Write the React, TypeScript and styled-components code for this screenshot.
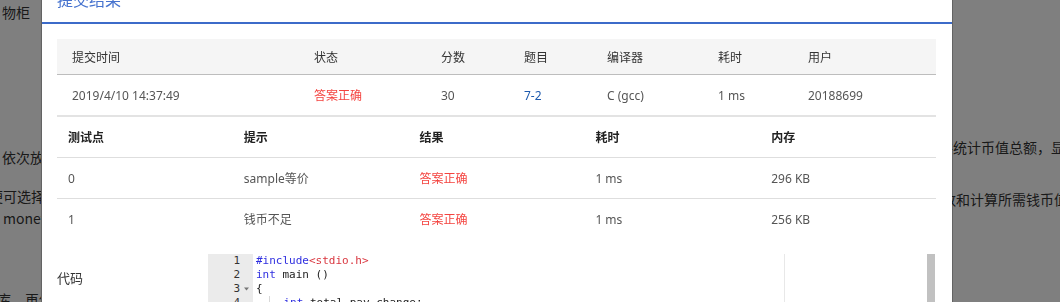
import React from "react";
import styled, { createGlobalStyle } from "styled-components";

const GlobalStyle = createGlobalStyle`
  html, body {
    margin: 0;
    padding: 0;
    overflow: hidden;
    background: #ffffff;
  }
  body {
    font-family: "Noto Sans", "Noto Sans CJK SC", sans-serif;
  }
`;

/* ---------- underlying page (dimmed by the overlay) ---------- */

const Page = styled.div`
  height: 302px;
  display: flex;
  justify-content: space-between;
  overflow: hidden;
  color: #333;
  font-family: "Noto Sans CJK SC", "Noto Sans", sans-serif;
  font-size: 14px;
  line-height: 22px;
`;

const Side = styled.div<{ $width: number }>`
  width: ${(p) => p.$width}px;
  display: flex;
  flex-direction: column;
  overflow: hidden;
`;

const PageLine = styled.div<{ $top: number; $shift?: number }>`
  margin-top: ${(p) => p.$top}px;
  margin-left: ${(p) => p.$shift ?? 0}px;
  white-space: nowrap;
`;

const PageRule = styled.div<{ $top: number }>`
  margin-top: ${(p) => p.$top}px;
  height: 1px;
  background: #333;
`;

/* ---------- modal ---------- */

const Overlay = styled.div`
  position: fixed;
  inset: 0;
  background: rgba(0, 0, 0, 0.5);
  display: flex;
  align-items: flex-start;
  padding-left: 42px;
  overflow: hidden;
`;

const Modal = styled.div`
  width: 910px;
  margin-top: -24px;
  background: #fff;
  box-shadow: 0 0 0 1px rgba(0, 0, 0, 0.22);
  display: flex;
  flex-direction: column;
`;

const ModalHeader = styled.div`
  height: 46px;
  border-bottom: 2px solid #3c6bc9;
  padding-left: 15px;
  display: flex;
  align-items: center;
`;

const Title = styled.h3`
  margin: 0;
  font-size: 16px;
  font-weight: normal;
  color: #4673cf;
  font-family: "Noto Sans CJK SC", sans-serif;
`;

const ModalBody = styled.div`
  padding: 15px 16px 0 15px;
  display: flex;
  flex-direction: column;
  font-size: 12px;
  color: #555;
`;

const SummaryRow = styled.div<{ $head?: boolean }>`
  display: grid;
  grid-template-columns: 242px 127px 83px 83px 111px 90px 1fr;
  height: ${(p) => (p.$head ? 35 : 40)}px;
  align-items: center;
  background: ${(p) => (p.$head ? "#f5f5f5" : "#fff")};
  border-bottom: ${(p) => (p.$head ? "1px solid #bdbdbd" : "none")};
  color: ${(p) => (p.$head ? "#333" : "#555")};
`;

const Cell = styled.div<{ $pad: number; $tone?: "ok" | "link" }>`
  padding-left: ${(p) => p.$pad}px;
  white-space: nowrap;
  color: ${(p) =>
    p.$tone === "ok" ? "#f4433f" : p.$tone === "link" ? "#1d59ad" : "inherit"};
`;

const CaseTable = styled.div`
  border-top: 2px solid #e3e3e3;
  display: flex;
  flex-direction: column;
`;

const CaseRow = styled.div<{ $head?: boolean; $last?: boolean }>`
  display: grid;
  grid-template-columns: repeat(5, 1fr);
  height: 40px;
  align-items: center;
  border-bottom: ${(p) => (p.$last ? "none" : "1px solid #dedede")};
  color: ${(p) => (p.$head ? "#222" : "#555")};
  font-weight: ${(p) => (p.$head ? 600 : "normal")};
`;

const CodeRow = styled.div`
  margin-top: 15px;
  display: flex;
  align-items: flex-start;
`;

const CodeLabel = styled.div`
  width: 151px;
  flex: none;
  padding-top: 17px;
  font-size: 13px;
  line-height: 14px;
  color: #333;
  font-family: "Noto Sans CJK SC", sans-serif;
`;

const Editor = styled.div`
  flex: 1;
  height: 420px;
  display: flex;
  position: relative;
  font-family: "DejaVu Sans Mono", monospace;
  font-size: 11px;
  line-height: 14px;
  color: #222;
`;

const Gutter = styled.div`
  width: 45px;
  flex: none;
  background: #ebebeb;
  color: #333;
  display: flex;
  flex-direction: column;
`;

const GutterCell = styled.div`
  display: flex;
  justify-content: flex-end;
  align-items: center;
  height: 14px;
`;

const FoldSlot = styled.span`
  width: 13px;
  display: flex;
  justify-content: center;
  align-items: center;
`;

const CodeArea = styled.div`
  flex: 1;
  position: relative;
  padding-left: 3px;
  display: flex;
  flex-direction: column;
`;

const CodeLine = styled.div`
  height: 14px;
  white-space: pre;
`;

const Kw = styled.span`
  color: #2f2fe0;
`;

const Str = styled.span`
  color: #d9363f;
`;

const Guide = styled.span`
  border-right: 1px solid #d8d8d8;
`;

const PrintMargin = styled.div`
  position: absolute;
  top: 0;
  bottom: 0;
  left: 531px;
  width: 1px;
  background: #e8e8e8;
`;

const ScrollThumb = styled.div`
  position: absolute;
  top: 0;
  right: 1px;
  width: 8px;
  height: 120px;
  background: #c1c1c1;
`;

const FoldIcon = () => (
  <svg width="5" height="4" viewBox="0 0 5 4">
    <path d="M0 0.5 L5 0.5 L2.5 3.5 Z" fill="#777" />
  </svg>
);

const summaryHead = ["提交时间", "状态", "分数", "题目", "编译器", "耗时", "用户"];

const cases = [
  { id: "0", hint: "sample等价", result: "答案正确", time: "1 ms", mem: "296 KB" },
  { id: "1", hint: "钱币不足", result: "答案正确", time: "1 ms", mem: "256 KB" },
];

const codeLines: React.ReactNode[] = [
  <>
    <Kw>#include</Kw>
    <Str>{"<stdio.h>"}</Str>
  </>,
  <>
    <Kw>int</Kw> main ()
  </>,
  <>{"{"}</>,
  <>
    <Guide>{"  "}</Guide>
    {"  "}
    <Kw>int</Kw> total,pay,change;
  </>,
  <>
    <Guide>{"  "}</Guide>
    {"  "}scanf(<Str>"%d"</Str>,&amp;pay);
  </>,
  <>
    <Guide>{"  "}</Guide>
    {"  "}
    <Kw>return</Kw> 0;
  </>,
  <>{"}"}</>,
];

export default function App() {
  return (
    <>
      <GlobalStyle />
      <Page>
        <Side $width={41}>
          <PageLine $top={1} $shift={2}>物柜</PageLine>
          <PageRule $top={76} />
          <PageLine $top={47} $shift={2}>依次放入</PageLine>
          <PageLine $top={17} $shift={-11}>便可选择</PageLine>
          <PageLine $top={0} $shift={3}>money</PageLine>
          <PageLine $top={59} $shift={-3}>库，再使用</PageLine>
        </Side>
        <Side $width={108}>
          <PageLine $top={136} $shift={-13}>并统计币值总额，显示</PageLine>
          <PageLine $top={30} $shift={-10}>数和计算所需钱币值</PageLine>
        </Side>
      </Page>
      <Overlay>
        <Modal>
          <ModalHeader>
            <Title>提交结果</Title>
          </ModalHeader>
          <ModalBody>
            <SummaryRow $head>
              {summaryHead.map((h) => (
                <Cell key={h} $pad={15}>
                  {h}
                </Cell>
              ))}
            </SummaryRow>
            <SummaryRow>
              <Cell $pad={15}>2019/4/10 14:37:49</Cell>
              <Cell $pad={15} $tone="ok">答案正确</Cell>
              <Cell $pad={15}>30</Cell>
              <Cell $pad={15} $tone="link">7-2</Cell>
              <Cell $pad={15}>C (gcc)</Cell>
              <Cell $pad={15}>1 ms</Cell>
              <Cell $pad={15}>20188699</Cell>
            </SummaryRow>
            <CaseTable>
              <CaseRow $head>
                {["测试点", "提示", "结果", "耗时", "内存"].map((h) => (
                  <Cell key={h} $pad={11}>
                    {h}
                  </Cell>
                ))}
              </CaseRow>
              {cases.map((c, i) => (
                <CaseRow key={c.id} $last={i === cases.length - 1}>
                  <Cell $pad={11}>{c.id}</Cell>
                  <Cell $pad={11}>{c.hint}</Cell>
                  <Cell $pad={11} $tone="ok">{c.result}</Cell>
                  <Cell $pad={11}>{c.time}</Cell>
                  <Cell $pad={11}>{c.mem}</Cell>
                </CaseRow>
              ))}
            </CaseTable>
            <CodeRow>
              <CodeLabel>代码</CodeLabel>
              <Editor>
                <Gutter>
                  {codeLines.map((_, i) => (
                    <GutterCell key={i}>
                      <span>{i + 1}</span>
                      <FoldSlot>{i === 2 ? <FoldIcon /> : null}</FoldSlot>
                    </GutterCell>
                  ))}
                </Gutter>
                <CodeArea>
                  {codeLines.map((l, i) => (
                    <CodeLine key={i}>{l}</CodeLine>
                  ))}
                  <PrintMargin />
                </CodeArea>
                <ScrollThumb />
              </Editor>
            </CodeRow>
          </ModalBody>
        </Modal>
      </Overlay>
    </>
  );
}
